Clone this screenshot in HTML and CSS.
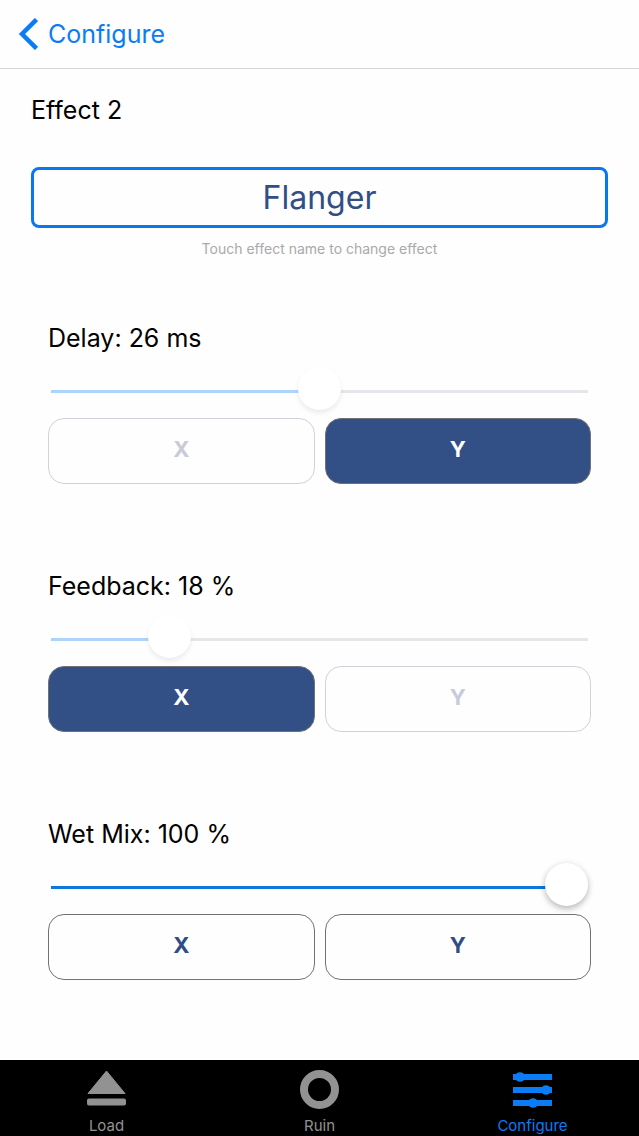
FILE: index.html
```html
<!DOCTYPE html>
<html lang="en">
<head>
<meta charset="utf-8">
<meta name="viewport" content="width=device-width, initial-scale=1">
<title>Configure</title>
<link rel="stylesheet" href="styles.css">
</head>
<body>
<header class="navbar">
  <a class="back" href="#configure">
    <svg class="back-icon" viewBox="0 0 20 32" aria-hidden="true"><path d="M18.500 1.500 4 16l14.500 14.500" fill="none" stroke="currentColor" stroke-width="4.500"/></svg>
    Configure
  </a>
</header>
<main class="content">
  <h1 class="title">Effect 2</h1>
  <button class="effect" type="button">Flanger</button>
  <p class="hint">Touch effect name to change effect</p>

  <section class="param assigned">
    <label class="label" for="delay">Delay: 26 ms</label>
    <input class="slider" id="delay" type="range" min="0" max="100" value="50" style="--fill: 50%" disabled>
    <div class="axes">
      <button class="axis" type="button" aria-pressed="false">X</button>
      <button class="axis on" type="button" aria-pressed="true">Y</button>
    </div>
  </section>

  <section class="param assigned">
    <label class="label" for="feedback">Feedback: 18 %</label>
    <input class="slider" id="feedback" type="range" min="0" max="100" step="0.1" value="19.7" style="--fill: 20%" disabled>
    <div class="axes">
      <button class="axis on" type="button" aria-pressed="true">X</button>
      <button class="axis" type="button" aria-pressed="false">Y</button>
    </div>
  </section>

  <section class="param">
    <label class="label" for="wet">Wet Mix: 100 %</label>
    <input class="slider" id="wet" type="range" min="0" max="100" value="100" style="--fill: 97%">
    <div class="axes">
      <button class="axis" type="button" aria-pressed="false">X</button>
      <button class="axis" type="button" aria-pressed="false">Y</button>
    </div>
  </section>
</main>
<nav class="tabbar">
  <a class="tab" href="#load">
    <svg class="tab-icon" viewBox="0 0 40 40" fill="currentColor" stroke="currentColor" stroke-linejoin="round" aria-hidden="true"><path d="M19.500 2 38 24.500H1z"/><rect x="1" y="30.500" width="37" height="5" rx="1" stroke-width="2"/></svg>
    Load
  </a>
  <a class="tab" href="#ruin">
    <svg class="tab-icon" viewBox="0 0 40 40" fill="none" stroke="currentColor" aria-hidden="true"><circle cx="19.500" cy="20.500" r="15.500" stroke-width="8"/></svg>
    Ruin
  </a>
  <a class="tab current" href="#configure" aria-current="page">
    <svg class="tab-icon" viewBox="0 0 40 40" fill="currentColor" aria-hidden="true"><path d="M0 5h39v6H0zM0 18h39v6H0zM0 31h39v6H0z"/><circle cx="7" cy="8" r="4.800"/><circle cx="33" cy="21" r="4.800"/><circle cx="20" cy="34" r="4.800"/></svg>
    Configure
  </a>
</nav>
</body>
</html>
```
FILE: styles.css
```css
* {
  box-sizing: border-box;
}

body {
  margin: 0;
  min-height: 100vh;
  display: flex;
  flex-direction: column;
  background: #fefefe;
  color: #000;
  font-family: Inter, "Liberation Sans", sans-serif;
}

button {
  font-family: inherit;
  cursor: pointer;
}

.navbar {
  display: flex;
  align-items: center;
  height: 69px;
  padding: 0 18px;
  border-bottom: 1px solid #d6d6da;
}

.back {
  display: flex;
  align-items: center;
  gap: 10px;
  color: #0a7cf5;
  font-size: 25px;
  line-height: 32px;
  text-decoration: none;
}

.back-icon {
  width: 20px;
  height: 32px;
}

.content {
  flex: 1;
  display: flex;
  flex-direction: column;
  padding: 25px 31px 40px;
}

.title {
  margin: 0 0 41px;
  font-size: 25px;
  font-weight: 400;
  line-height: 32px;
}

.effect {
  height: 61px;
  padding: 0;
  border: 3px solid #0878ee;
  border-radius: 8px;
  background: transparent;
  color: #324f85;
  font-size: 32px;
}

.hint {
  margin: 11px 0 63px;
  color: #a9a9ab;
  font-size: 14px;
  line-height: 20px;
  text-align: center;
}

.param {
  display: flex;
  flex-direction: column;
  padding: 0 17px;
}

.param + .param {
  margin-top: 86px;
}

.label {
  font-size: 25px;
  line-height: 32px;
}

.slider {
  --played: #0d78dc;
  --rest: #e6e5ea;
  --shadow: 0 3px 6px rgba(0, 0, 0, 0.25), 0 0 8px rgba(0, 0, 0, 0.05);
  appearance: none;
  height: 44px;
  margin: 13px 3px 7px;
  background: transparent;
}

.assigned .slider {
  --played: #add4fb;
  --shadow: 0 3px 5px rgba(0, 0, 0, 0.08);
}

.slider::-webkit-slider-runnable-track {
  height: 44px;
  background: linear-gradient(to right, var(--played) var(--fill), var(--rest) var(--fill)) 0 23px / 100% 3px no-repeat;
}

#wet::-webkit-slider-runnable-track {
  background-size: 97% 3px;
}

.slider::-webkit-slider-thumb {
  appearance: none;
  width: 43px;
  height: 43px;
  border-radius: 50%;
  background: #fff;
  box-shadow: var(--shadow);
}

.axes {
  display: grid;
  grid-template-columns: 1fr 1fr;
  gap: 10px;
}

.axis {
  height: 66px;
  padding: 0 0 4px;
  border: 1px solid #727276;
  border-radius: 16px;
  background: transparent;
  color: #304c84;
  font-size: 22px;
  font-weight: 700;
}

.assigned .axis {
  border-color: #d2d1d9;
  color: #c8cad9;
}

.assigned .axis.on {
  border-color: #727276;
  background: #324f86;
  color: #fff;
}

.tabbar {
  display: grid;
  grid-template-columns: repeat(3, 1fr);
  height: 76px;
  padding-top: 9px;
  background: #000;
}

.tab {
  display: flex;
  flex-direction: column;
  align-items: center;
  gap: 7px;
  color: #929292;
  font-size: 15px;
  line-height: 20px;
  text-decoration: none;
}

.tab.current {
  color: #0a7cf5;
}

.tab-icon {
  width: 40px;
  height: 40px;
}
```
